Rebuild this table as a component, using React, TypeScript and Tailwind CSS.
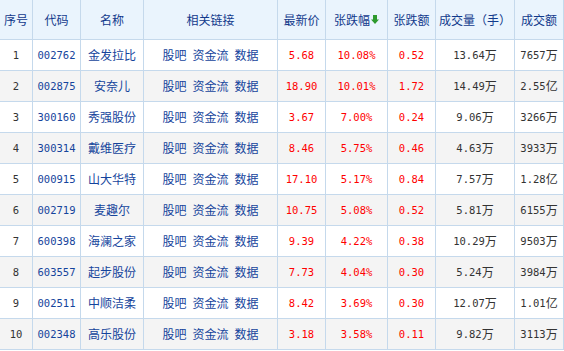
import React from "react";

const rows = [
  ["1", "002762", "金发拉比", "5.68", "10.08%", "0.52", "13.64", "万", "7657", "万"],
  ["2", "002875", "安奈儿", "18.90", "10.01%", "1.72", "14.49", "万", "2.55", "亿"],
  ["3", "300160", "秀强股份", "3.67", "7.00%", "0.24", "9.06", "万", "3266", "万"],
  ["4", "300314", "戴维医疗", "8.46", "5.75%", "0.46", "4.63", "万", "3933", "万"],
  ["5", "000915", "山大华特", "17.10", "5.17%", "0.84", "7.57", "万", "1.28", "亿"],
  ["6", "002719", "麦趣尔", "10.75", "5.08%", "0.52", "5.81", "万", "6155", "万"],
  ["7", "600398", "海澜之家", "9.39", "4.22%", "0.38", "10.29", "万", "9503", "万"],
  ["8", "603557", "起步股份", "7.73", "4.04%", "0.30", "5.24", "万", "3984", "万"],
  ["9", "002511", "中顺洁柔", "8.42", "3.69%", "0.30", "12.07", "万", "1.01", "亿"],
  ["10", "002348", "高乐股份", "3.18", "3.58%", "0.11", "9.82", "万", "3113", "万"],
];

const cell = "flex items-center justify-center border-r border-b border-[#c5d9ec] whitespace-nowrap";
const mono = "font-['DejaVu_Sans_Mono',monospace] text-[10.5px]";
const head = `${cell} bg-[#eaf4fd] text-[#123a8c]`;

export default function App() {
  return (
    <div className="relative w-[564px] h-[351px] bg-white text-[12px] leading-none overflow-hidden font-['Noto_Sans_CJK_SC','Noto_Sans',sans-serif]">
      <div className="grid grid-cols-[33px_48px_63px_134px_48px_62px_48px_79px_49px] grid-rows-[40px_repeat(10,31px)]">
        {["序号", "代码", "名称", "相关链接", "最新价"].map((h) => (
          <div key={h} className={head}>{h}</div>
        ))}
        <div className={head}>
          张跌幅
          <svg width="8" height="9" viewBox="0 0 8 9" className="ml-[1px]">
            <path d="M2 0h4v4.5h2L4 9 0 4.5h2z" fill="#2e9a2e" />
          </svg>
        </div>
        {["张跌额", "成交量（手）", "成交额"].map((h) => (
          <div key={h} className={head}>{h}</div>
        ))}
        {rows.map((r, i) => {
          const bg = i % 2 === 0 ? "bg-white" : "bg-[#f4f4f4]";
          return (
            <React.Fragment key={r[0]}>
              <div className={`${cell} ${bg} text-[#333]`}><span className={mono}>{r[0]}</span></div>
              <div className={`${cell} ${bg} text-[#15449c]`}><span className={mono}>{r[1]}</span></div>
              <div className={`${cell} ${bg} text-[#15449c]`}>{r[2]}</div>
              <div className={`${cell} ${bg} text-[#15449c] gap-[6px]`}>
                <span>股吧</span>
                <span>资金流</span>
                <span>数据</span>
              </div>
              <div className={`${cell} ${bg} text-[#ff0000]`}><span className={mono}>{r[3]}</span></div>
              <div className={`${cell} ${bg} text-[#ff0000]`}><span className={mono}>{r[4]}</span></div>
              <div className={`${cell} ${bg} text-[#ff0000]`}><span className={mono}>{r[5]}</span></div>
              <div className={`${cell} ${bg} text-[#333]`}><span className={mono}>{r[6]}</span><span>{r[7]}</span></div>
              <div className={`${cell} ${bg} text-[#333]`}><span className={mono}>{r[8]}</span><span>{r[9]}</span></div>
            </React.Fragment>
          );
        })}
      </div>
    </div>
  );
}
